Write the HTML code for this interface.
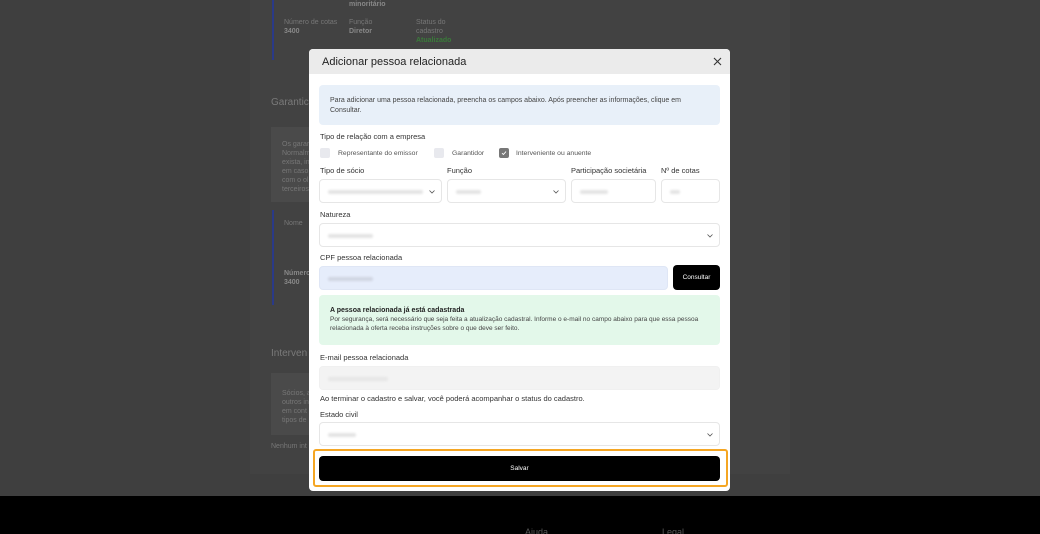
<!DOCTYPE html>
<html><head><meta charset="utf-8"><style>
*{box-sizing:border-box;margin:0;padding:0}
html,body{width:1040px;height:534px;overflow:hidden}
body{background:#3f3f3f;font-family:"Liberation Sans",sans-serif;position:relative;color:#222}
.card{position:absolute;left:250px;top:0;width:540px;height:474px;background:#424242}
.footer{position:absolute;left:0;top:496px;width:1040px;height:38px;background:#000}
.ft{position:absolute;top:527px;font-size:9px;color:#555}
.bg{position:absolute;font-size:7px;color:#777;line-height:9px}
.bgb{color:#888;font-weight:bold}
.h{position:absolute;font-size:10px;color:#7a7a7a}
.bar{position:absolute;left:272px;width:2px;background:#2a3a88}
.modal{position:absolute;left:309px;top:49px;width:421px;height:442px;background:#fff;border-radius:4px;overflow:hidden}
.mh{height:25px;background:#ebebeb;font-size:11px;padding:7px 13px;color:#222;position:relative}
.x{position:absolute;right:8px;top:8px}
.a{position:absolute}
.lbl{font-size:7.5px;color:#333}
.inp{position:absolute;border:1px solid #e6e6e6;border-radius:4px;height:24px;background:#fff}
.blur{position:absolute;top:10px;left:8px;height:4px;background:#e4e4e4;border-radius:2px;filter:blur(1px)}
.chev{position:absolute;right:6px;top:10px}
.cb{position:absolute;width:10px;height:10px;background:#e8e9ee;border-radius:2px}
</style></head><body>
<div class="card"></div>
<div class="bar" style="top:0;height:60px"></div>
<div class="bar" style="top:210px;height:95px"></div>
<div class="bg bgb" style="left:349px;top:0">minoritário</div>
<div class="bg" style="left:284px;top:18px">Número de cotas<br><b class="bgb">3400</b></div>
<div class="bg" style="left:349px;top:18px">Função<br><b class="bgb">Diretor</b></div>
<div class="bg" style="left:416px;top:18px">Status do<br>cadastro<br><b style="color:#3a7a3a">Atualizado</b></div>
<div class="h" style="left:271px;top:97px">Garantic</div>
<div style="position:absolute;left:271px;top:127px;width:40px;height:75px;background:#4a4a4a"></div>
<div class="bg" style="left:282px;top:140px">Os garar<br>Normalm<br>exista, in<br>em caso<br>com o ol<br>terceiros</div>
<div class="bg" style="left:284px;top:219px">Nome</div>
<div class="bg bgb" style="left:284px;top:269px">Número<br>3400</div>
<div class="h" style="left:271px;top:348px">Interven</div>
<div style="position:absolute;left:271px;top:373px;width:40px;height:62px;background:#4a4a4a"></div>
<div class="bg" style="left:282px;top:389px">Sócios, a<br>outros in<br>em cont<br>tipos de</div>
<div class="bg" style="left:271px;top:442px">Nenhum int</div>
<div class="footer"></div>
<div class="ft" style="left:525px">Ajuda</div>
<div class="ft" style="left:662px">Legal</div>

<div class="modal">
<div class="mh">Adicionar pessoa relacionada<svg class="x" width="9" height="9" viewBox="0 0 9 9"><path d="M1 1L8 8M8 1L1 8" stroke="#333" stroke-width="1.1"/></svg></div>
<div class="a" style="left:10px;top:36px;width:401px;height:40px;background:#e8f0f9;border-radius:4px;padding:11px 11px;font-size:7px;line-height:9.5px;color:#444">Para adicionar uma pessoa relacionada, preencha os campos abaixo. Após preencher as informações, clique em Consultar.</div>
<div class="a lbl" style="left:11px;top:83px">Tipo de relação com a empresa</div>
<div class="cb" style="left:11px;top:99px"></div><div class="a lbl" style="left:29px;top:101px;font-size:6.8px;color:#555">Representante do emissor</div>
<div class="cb" style="left:125px;top:99px"></div><div class="a lbl" style="left:143px;top:101px;font-size:6.8px;color:#555">Garantidor</div>
<div class="cb" style="left:190px;top:99px;background:#777"><svg width="10" height="10" viewBox="0 0 10 10" style="position:absolute;left:0;top:0"><path d="M3 5.2L4.4 6.5L7 3.6" stroke="#fff" stroke-width="0.9" fill="none"/></svg></div><div class="a lbl" style="left:207px;top:101px;font-size:6.8px;color:#555">Interveniente ou anuente</div>
<div class="a lbl" style="left:11px;top:117px">Tipo de sócio</div>
<div class="a lbl" style="left:138px;top:117px">Função</div>
<div class="a lbl" style="left:262px;top:117px">Participação societária</div>
<div class="a lbl" style="left:352px;top:117px">Nº de cotas</div>
<div class="inp" style="left:10px;top:130px;width:123px"><div class="blur" style="width:95px"></div><svg class="chev" width="6" height="4" viewBox="0 0 6 4"><path d="M0.5 0.5L3 3L5.5 0.5" stroke="#555" stroke-width="0.8" fill="none"/></svg></div>
<div class="inp" style="left:138px;top:130px;width:119px"><div class="blur" style="width:25px"></div><svg class="chev" width="6" height="4" viewBox="0 0 6 4"><path d="M0.5 0.5L3 3L5.5 0.5" stroke="#555" stroke-width="0.8" fill="none"/></svg></div>
<div class="inp" style="left:262px;top:130px;width:85px"><div class="blur" style="width:28px"></div></div>
<div class="inp" style="left:352px;top:130px;width:59px"><div class="blur" style="width:10px"></div></div>
<div class="a lbl" style="left:11px;top:161px">Natureza</div>
<div class="inp" style="left:10px;top:174px;width:401px"><div class="blur" style="width:45px"></div><svg class="chev" width="6" height="4" viewBox="0 0 6 4"><path d="M0.5 0.5L3 3L5.5 0.5" stroke="#555" stroke-width="0.8" fill="none"/></svg></div>
<div class="a lbl" style="left:11px;top:204px">CPF pessoa relacionada</div>
<div class="inp" style="left:10px;top:217px;width:349px;background:#e6edfb;border-color:#dfe6f5"><div class="blur" style="width:45px;background:#d0d5e2"></div></div>
<div class="a" style="left:364px;top:216px;width:47px;height:25px;background:#000;border-radius:4px;color:#fff;font-size:6.5px;text-align:center;line-height:25px">Consultar</div>
<div class="a" style="left:10px;top:246px;width:401px;height:50px;background:#e3f8ea;border-radius:4px;padding:11px 11px;font-size:6.5px;line-height:9px;color:#444"><b style="font-size:7px;color:#222">A pessoa relacionada já está cadastrada</b><br>Por segurança, será necessário que seja feita a atualização cadastral. Informe o e-mail no campo abaixo para que essa pessoa relacionada à oferta receba instruções sobre o que deve ser feito.</div>
<div class="a lbl" style="left:11px;top:304px">E-mail pessoa relacionada</div>
<div class="inp" style="left:10px;top:317px;width:401px;background:#f3f3f3;border-color:#f0f0f0"><div class="blur" style="width:60px;background:#e6e6e6"></div></div>
<div class="a lbl" style="left:11px;top:345px">Ao terminar o cadastro e salvar, você poderá acompanhar o status do cadastro.</div>
<div class="a lbl" style="left:11px;top:361px">Estado civil</div>
<div class="inp" style="left:10px;top:373px;width:401px"><div class="blur" style="width:28px"></div><svg class="chev" width="6" height="4" viewBox="0 0 6 4"><path d="M0.5 0.5L3 3L5.5 0.5" stroke="#555" stroke-width="0.8" fill="none"/></svg></div>
<div class="a" style="left:4px;top:400px;width:415px;height:38px;border:2px solid #f5a623;border-radius:3px"></div>
<div class="a" style="left:10px;top:407px;width:401px;height:25px;background:#000;border-radius:4px;color:#fff;font-size:6.5px;text-align:center;line-height:25px">Salvar</div>
</div>
</body></html>
